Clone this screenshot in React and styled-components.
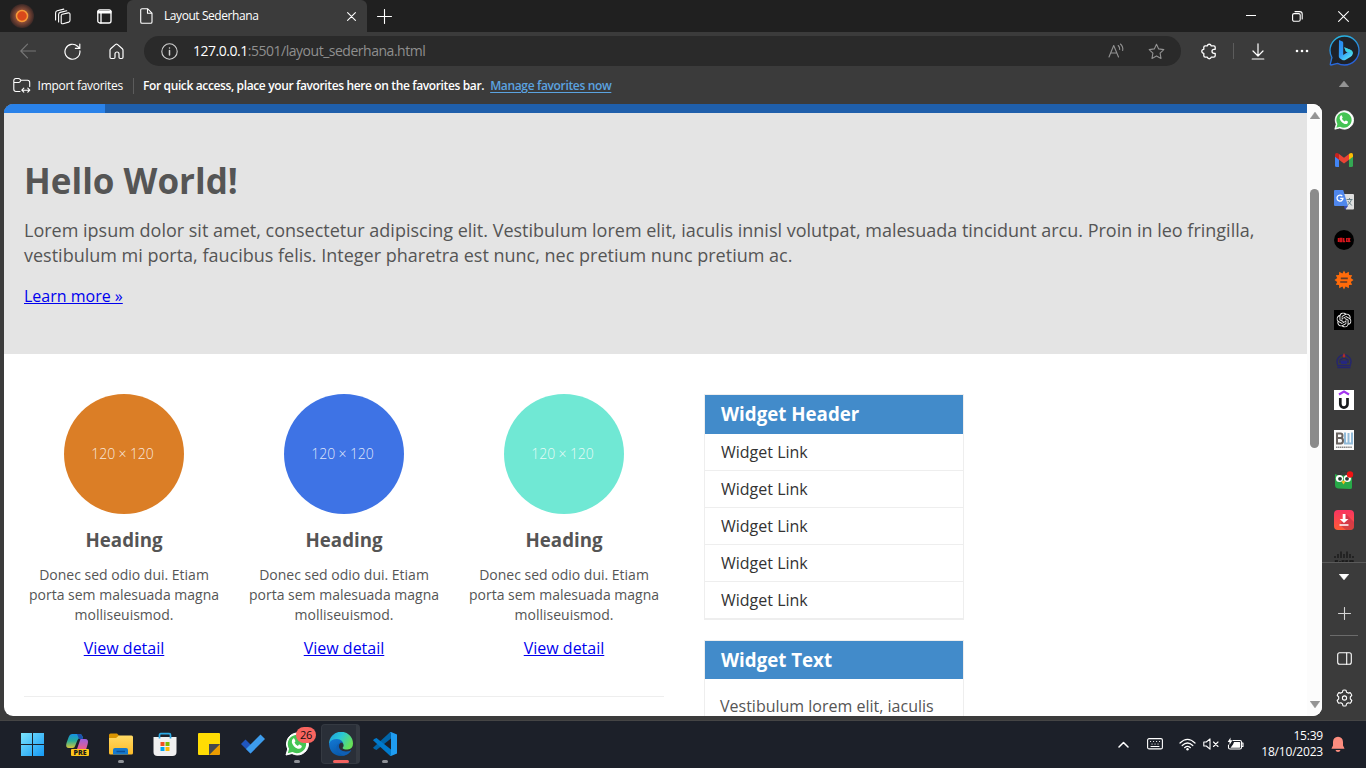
import React from "react";
import styled, { createGlobalStyle } from "styled-components";

const GlobalStyle = createGlobalStyle`
  * { box-sizing: border-box; }
  body { margin: 0; background: #1d212b; overflow: hidden; font-family: "Open Sans", "Noto Sans", sans-serif; }
  h1, h2, h3, p, ul { margin: 0; padding: 0; }
  svg { display: block; flex: none; }
`;

/* ---------- desktop and browser frame ---------- */

const Desktop = styled.div`
  width: 1366px;
  height: 768px;
  display: flex;
  flex-direction: column;
  overflow: hidden;
`;

const TitleBar = styled.header`
  height: 32px;
  flex: none;
  display: flex;
  background: #202020;
  color: #fff;
`;

const TitleTools = styled.div`
  width: 127px;
  display: flex;
  align-items: center;
  padding-left: 10px;
`;

const ToolSlot = styled.span`
  width: ${(p) => p.$w}px;
  flex: none;
  display: flex;
  justify-content: ${(p) => p.$align || "center"};
`;

const Tab = styled.div`
  width: 240px;
  display: flex;
  align-items: center;
  padding: 0 11px 0 13px;
  background: #3b3b3b;
  border-radius: 6px 6px 0 0;
`;

const UiText = styled.span`
  font-size: 12px;
  line-height: 16px;
  white-space: nowrap;
  color: ${(p) => p.$color || "#fff"};
  font-weight: ${(p) => (p.$bold ? 600 : 400)};
  letter-spacing: ${(p) => p.$track || 0}px;
`;

const TabTitle = styled(UiText)`
  flex: 1;
  margin-left: 11px;
`;

const NewTab = styled.div`
  display: flex;
  align-items: center;
  padding-left: 10px;
  flex: 1;
`;

const WindowButtons = styled.div`
  display: flex;
  align-items: center;
`;

const WindowButton = styled.span`
  width: 46px;
  display: flex;
  justify-content: center;
`;

const BrowserBody = styled.div`
  height: 689px;
  flex: none;
  display: flex;
  background: #3b3b3b;
  border-bottom: 1px solid #454545;
`;

const MainColumn = styled.div`
  width: 1322px;
  display: flex;
  flex-direction: column;
`;

const Toolbar = styled.div`
  height: 38px;
  display: flex;
  align-items: center;
  padding-left: 6px;
`;

const ToolButton = styled.span`
  width: 44px;
  flex: none;
  display: flex;
  justify-content: center;
`;

const Omnibox = styled.div`
  width: 1037px;
  height: 30px;
  flex: none;
  margin-left: 6px;
  padding: 0 16px 0 17px;
  border-radius: 15px;
  background: #2a2a2a;
  display: flex;
  align-items: center;
`;

const Url = styled.span`
  flex: 1;
  margin-left: 15px;
  font-size: 14px;
  line-height: 20px;
  letter-spacing: -0.48px;
  color: #8f8f8f;
  b { font-weight: 400; color: #fff; }
`;

const OmniIcons = styled.span`
  display: flex;
  gap: 23px;
`;

const ActionRow = styled.div`
  flex: 1;
  display: flex;
  align-items: center;
  padding-left: 20px;
`;

const Separator = styled.i`
  width: 1px;
  height: 16px;
  flex: none;
  background: #5c5c5c;
  margin: ${(p) => p.$m};
`;

const FavoritesBar = styled.div`
  height: 34px;
  display: flex;
  align-items: center;
  padding: 0 0 3px 13px;
`;

const ManageLink = styled(UiText)`
  color: #5ba3e0;
  text-decoration: underline;
  text-underline-offset: 2px;
  margin-left: 6px;
`;

/* ---------- web page ---------- */

const Viewport = styled.main`
  width: 1318px;
  height: 612px;
  margin-left: 4px;
  border-radius: 9px;
  overflow: hidden;
  display: flex;
  background: #fff;
`;

const Page = styled.div`
  width: 1303px;
  height: 612px;
  overflow: hidden;
  color: #555;
`;

const NavStrip = styled.div`
  height: 9px;
  background: #1f5fab;
`;

const NavActive = styled.div`
  width: 101px;
  height: 9px;
  background: #2a82e9;
`;

const Hero = styled.section`
  height: 241px;
  padding: 44px 20px 0;
  background: #e4e4e4;
`;

const HeroTitle = styled.h1`
  font-size: 35px;
  line-height: 48px;
  margin-bottom: 13px;
`;

const HeroText = styled.p`
  font-size: 18px;
  line-height: 25px;
  margin-bottom: 17px;
  white-space: pre-line;
`;

const PageLink = styled.span`
  display: block;
  font-size: 16px;
  line-height: 22px;
  color: #0000ee;
  text-decoration: underline;
`;

const Content = styled.div`
  display: flex;
  align-items: flex-start;
  gap: 40px;
  padding: 40px 20px 0;
`;

const Features = styled.section`
  width: 640px;
  height: 303px;
  display: flex;
  gap: 20px;
  border-bottom: 1px solid #eee;
`;

const Feature = styled.article`
  width: 200px;
  text-align: center;
`;

const Circle = styled.div`
  width: 120px;
  height: 120px;
  margin: 0 auto;
  padding: 0 3px 1px 0;
  border-radius: 50%;
  display: flex;
  align-items: center;
  justify-content: center;
  background: ${(p) => p.$color};
  color: rgba(255, 255, 255, 0.85);
  font-size: 14px;
  font-weight: 300;
  letter-spacing: -0.1px;
`;

const FeatureTitle = styled.h3`
  font-size: 18.72px;
  line-height: 25px;
  margin: 13px 0;
`;

const FeatureText = styled.p`
  font-size: 14px;
  line-height: 20px;
  margin-bottom: 12px;
`;

const Aside = styled.aside`
  width: 260px;
  display: flex;
  flex-direction: column;
  gap: 20px;
`;

const Widget = styled.section`
  border: 1px solid #eee;
`;

const WidgetTitle = styled.h3`
  height: ${(p) => p.$h}px;
  padding: 6px 16px;
  font-size: 18.72px;
  line-height: 26px;
  color: #fff;
  background: #428bca;
`;

const WidgetLink = styled.div`
  height: 37px;
  padding: 7px 16px;
  font-size: 16px;
  line-height: 22px;
  color: #333;
  border-bottom: 1px solid #eee;
`;

const WidgetText = styled.p`
  padding: 16px 15px;
  font-size: 16px;
  line-height: 22px;
`;

const ScrollTrack = styled.div`
  width: 15px;
  display: flex;
  flex-direction: column;
  align-items: center;
  padding: 8px 0 8px;
  background: #fcfcfc;
`;

const ScrollThumb = styled.div`
  width: 9px;
  height: 259px;
  margin: 70px 0 auto;
  border-radius: 5px;
  background: #8b8b8b;
`;

/* ---------- side bar ---------- */

const Sidebar = styled.nav`
  width: 44px;
  display: flex;
  flex-direction: column;
  align-items: center;
  padding-top: 3px;
`;

const SideArrow = styled.span`
  height: 34px;
  padding-top: 2px;
  display: flex;
  align-items: center;
`;

const SideList = styled.div`
  width: 44px;
  height: 463px;
  flex: none;
  overflow: hidden;
  border-bottom: 1px solid #5a5a5a;
`;

const SideItem = styled.div`
  height: 40px;
  display: flex;
  align-items: center;
  justify-content: center;
`;

const SideTools = styled.div`
  flex: 1;
  display: flex;
  flex-direction: column;
  align-items: center;
`;

const SideTool = styled.span`
  height: ${(p) => p.$h}px;
  display: flex;
  align-items: center;
`;

const SideRule = styled.i`
  width: 28px;
  height: 1px;
  background: #6b6b6b;
`;

/* ---------- task bar ---------- */

const TaskBar = styled.footer`
  height: 47px;
  flex: none;
  display: flex;
  justify-content: space-between;
  background: #1c2029;
`;

const TaskApps = styled.div`
  display: flex;
  padding-left: 11px;
`;

const TaskApp = styled.div`
  width: 44px;
  height: 47px;
  position: relative;
  display: flex;
  flex-direction: column;
  align-items: center;
  padding-top: 11px;
`;

const ActiveTile = styled.span`
  position: absolute;
  left: 2px;
  top: 3px;
  width: 39px;
  height: 40px;
  border-radius: 4px;
  background: #2a2f38;
  border: 1px solid #353a42;
  border-right-width: 4px;
  z-index: 0;
`;

const AppArt = styled.span`
  position: relative;
`;

const RunMark = styled.i`
  position: relative;
  width: ${(p) => (p.$active ? 16 : 6)}px;
  height: 3px;
  margin-top: 4px;
  border-radius: 2px;
  background: ${(p) => (p.$active ? "#f2625f" : "#8f9297")};
`;

const Badge = styled.span`
  position: absolute;
  left: 21px;
  top: 6px;
  width: 20px;
  height: 16px;
  border-radius: 8px;
  background: #f8645f;
  color: #111;
  font-size: 11px;
  line-height: 16px;
  text-align: center;
  letter-spacing: -0.3px;
`;

const Tray = styled.div`
  display: flex;
  align-items: center;
  padding: 0 21px 1px 0;
`;

const TraySlot = styled.span`
  width: ${(p) => p.$w}px;
  display: flex;
  justify-content: center;
`;

const Clock = styled.div`
  width: 72px;
  display: flex;
  flex-direction: column;
  align-items: flex-end;
  margin-right: 8px;
`;

/* ---------- icons ---------- */

const Line = ({ w = 16, h = w, c = "#fff", s = 1.1, children }) => (
  <svg width={w} height={h} viewBox={`0 0 ${w} ${h}`} fill="none" stroke={c} strokeWidth={s} strokeLinecap="round" strokeLinejoin="round">
    {children}
  </svg>
);

const Art = ({ w = 20, h = w, children }) => (
  <svg width={w} height={h} viewBox={`0 0 ${w} ${h}`}>{children}</svg>
);

const ProfileIcon = () => (
  <Art w={24}>
    <defs>
      <radialGradient id="glow">
        <stop offset="45%" stopColor="#98533b" />
        <stop offset="100%" stopColor="#3b2826" />
      </radialGradient>
    </defs>
    <circle cx="12" cy="12" r="12" fill="url(#glow)" />
    <circle cx="12" cy="12" r="5.5" fill="#d9481b" stroke="#f49a38" strokeWidth="1.5" />
  </Art>
);

const WorkspacesIcon = () => (
  <Line w={17}>
    <path d="M8.300 6.300 14.200 4.900Q16 4.600 16 6.300V12.300Q16 13.700 14.700 14.100L9 15.700Q7.200 16.100 7.200 14.400V7.900Q7.200 6.600 8.300 6.300Z" />
    <path d="M4.600 14V6.500Q4.600 4.800 6.200 4.400L12.800 2.800M1.600 12V4.900Q1.600 3.200 3.200 2.800L9.800 1.100" />
  </Line>
);

const TabActionsIcon = () => (
  <Line w={15} s={1.3}>
    <rect x=".8" y=".8" width="13.2" height="13.2" rx="2" />
    <path d="M1 2.5h13M1 3.8h13M4 4v10" />
  </Line>
);

const FileIcon = () => (
  <Line w={13} h={16}>
    <path d="M2 .7h5.5L12 5.2V14a1.3 1.3 0 0 1-1.3 1.3H2A1.3 1.3 0 0 1 .7 14V2A1.3 1.3 0 0 1 2 .7ZM7.5.9v4.3H12" />
  </Line>
);

const CloseIcon = ({ s = 9 }) => (
  <Line w={s}>
    <path d={`M.6.6 ${s - 0.6} ${s - 0.6}M${s - 0.6}.6.6 ${s - 0.6}`} />
  </Line>
);

const PlusIcon = ({ s = 15, c }) => (
  <Line w={s} c={c}>
    <path d={`M${s / 2} .5v${s - 1}M.5 ${s / 2}h${s - 1}`} />
  </Line>
);

const BackIcon = () => (
  <Line c="#777"><path d="M15.5 8H.8M7.5 1.2.8 8l6.7 6.8" /></Line>
);

const RefreshIcon = () => (
  <Line w={17} s={1.2}><path d="M15.9 7.8a7.5 7.5 0 1 1-2.4-4.6l2 2M15.8 1v4.4h-4.4" /></Line>
);

const HomeIcon = () => (
  <Line w={15} h={17} s={1.2}>
    <path d="M1 7.2Q1 6.3 1.7 5.7L6.6 1.4q.9-.7 1.8 0l4.9 4.3q.7.6.7 1.5v7.1q0 1.2-1.2 1.2h-1.600q-1.200 0-1.200-1.200v-3.300a2 2 0 0 0-4 0v3.300q0 1.200-1.200 1.200H2.200Q1 15.500 1 14.300Z" />
  </Line>
);

const InfoIcon = () => (
  <Line w={17} c="#d0d0d0" s={1.1}>
    <circle cx="8.5" cy="8.5" r="7.7" />
    <path d="M8.500 7.500v4.500M8.500 4.900v.2" strokeWidth="1.500" />
  </Line>
);

const ImportIcon = () => (
  <Line w={18} h={17}>
    <path d="M7 14.500H3A2.200 2.200 0 0 1 .8 12.300V3.500A2 2 0 0 1 2.800 1.500H5.500q.8 0 1.400.7L8 3.300h6.500a2.200 2.200 0 0 1 2.200 2.200V9.500M1 5.500h4.700q.7 0 1.200-.6L8 3.500M9 13.200h7.500M10.800 11.200l-2 2 2 2M14.800 11.200l2 2-2 2" />
  </Line>
);

const ReadAloudIcon = () => (
  <Line w={17} c="#929292">
    <path d="M1 14 5.700 2.500 10.500 14M2.600 10h6.300M10.200 2.500q1.800 1.700 1.500 4M12.400 1q3 2.600 2.300 6.500" />
  </Line>
);

const StarIcon = () => (
  <Line w={17} c="#929292">
    <path d="m8.500 1.200 2.200 4.700 5.100.7-3.700 3.600.9 5.200-4.500-2.500-4.500 2.500.9-5.200L1.200 6.600l5.100-.7Z" />
  </Line>
);

const PuzzleIcon = () => (
  <Line w={17} s={1.3}>
    <path d="M4.200 2.800H6.300a2 2 0 0 1 3.900 0H12.800Q14.200 2.800 14.200 4.200V6.300H13a2 2 0 0 0 0 4h1.200V12.800Q14.200 14.200 12.800 14.200H10.200a2 2 0 0 1-3.900 0H4.200Q2.800 14.200 2.800 12.800V10.300a2 2 0 0 1 0-4V4.200Q2.800 2.800 4.200 2.800Z" />
  </Line>
);

const DownloadIcon = () => (
  <Line w={14} h={17} s={1.2}><path d="M7 .8v12M2 8l5 5 5-5M1.200 16h11.600" /></Line>
);

const DotsIcon = () => (
  <Art w={14} h={4}>
    {[2, 7, 12].map((x) => <circle key={x} cx={x} cy="2" r="1.300" fill="#fff" />)}
  </Art>
);

const Triangle = ({ up, c = "#949494", w = 10, h = 6 }) => (
  <Art w={w} h={h}>
    <path d={up ? `M${w / 2} 0 ${w} ${h}H0Z` : `M0 0H${w}L${w / 2} ${h}Z`} fill={c} stroke={c} strokeWidth=".4" strokeLinejoin="round" />
  </Art>
);

const BingIcon = () => (
  <Art w={31}>
    <defs>
      <linearGradient id="bingRing" x1="0" y1="0" x2=".3" y2="1">
        <stop offset="0" stopColor="#28bde2" /><stop offset="1" stopColor="#2863dc" />
      </linearGradient>
      <linearGradient id="bingB" x1="0" y1="0" x2=".6" y2="1">
        <stop offset="0" stopColor="#2389ef" /><stop offset=".6" stopColor="#329bf5" /><stop offset="1" stopColor="#54ddf7" />
      </linearGradient>
    </defs>
    <path d="M1 15.500a14.500 14.500 0 1 1 14.500 14.500Q11.500 30 8.500 28.400L2 30q-1 0-.7-1L2.900 22.500Q1 19 1 15.500Z" fill="#1e2229" stroke="url(#bingRing)" strokeWidth="1.300" />
    <path d="m10 5 3 1.200q1.200.4 1.200 1.600V20l4.300-2.700-1.600-.8-1.700-4.300 6.100 2.500q2.900 1.300 2.400 4.400-.3 1.600-2 2.600l-5 3q-2 1.100-3.800 0L11 23.500Q9.800 22.700 9.800 21.300Z" fill="url(#bingB)" />
    <path d="m15.200 12.200 6.100 2.500q2.900 1.300 2.400 4.400-2.700-2.500-6.800-2.600Z" fill="#3ed2dd" />
  </Art>
);

const WhatsAppIcon = ({ s = 20 }) => (
  <svg width={s} height={s} viewBox="0 0 24 24">
    <path d="M1 23 2.700 17A11 11 0 1 1 7 21.500Z" fill="#fff" stroke="#fff" strokeLinejoin="round" />
    <path d="m2.800 21.200 1.300-4.400a9.200 9.200 0 1 1 3.300 3.200Z" fill="#45c454" />
    <path d="M8.200 6.500q.7-.4 1.200.2l1 2.200q.1.500-.9 1.600.9 2.200 3.400 3.400 1-1.400 1.500-1.300l2.300 1.200q.4.500-.4 2-1.200 1.500-3.500.9Q8 15 6.800 10.200q-.2-2.600 1.400-3.700Z" fill="#fff" />
  </svg>
);

const GmailIcon = () => (
  <Art>
    <path d="M1 5v10.500Q1 17 2.500 17H5V8Z" fill="#4285f4" />
    <path d="M15 8v9h2.500q1.500 0 1.500-1.500V5Z" fill="#34a853" />
    <path d="m5 4 5 3.800L15 4v5.800l-5 3.800-5-3.800Z" fill="#ea4335" />
    <path d="M1 5q0-3 3-1.700L5 4v5.800L1 6.800Z" fill="#c5221f" />
    <path d="M19 5q0-3-3-1.700L15 4v5.800l4-3Z" fill="#fbbc04" />
  </Art>
);

const TranslateIcon = () => (
  <Art>
    <path d="M8 4h11q1 0 1 1v13.500q0 1-1 1h-7Z" fill="#dedede" />
    <path d="m10 16 4 0-3 4Z" fill="#3a49b0" />
    <path d="M1 0h8.200L14 16H1q-1 0-1-1V1q0-1 1-1Z" fill="#4f87ed" />
    <path d="M8.300 6.200A3 3 0 1 0 9 8.300H6.200" fill="none" stroke="#fff" strokeWidth="1.300" />
    <path d="M12.500 9.500h6M15.500 8v1.500M17.500 9.500q-.8 3.500-4 5.500M13.800 11l4 4.500" fill="none" stroke="#678087" />
  </Art>
);

const IdlixIcon = () => (
  <Art>
    <circle cx="10" cy="10" r="10" fill="#000" />
    <path d="M4.500 8v4M6.200 8.500h1.600v3H6.200ZM9.700 8v3.500h1.500M12.700 8v4M14 8l2 4M16 8l-2 4" fill="none" stroke="#d5151c" strokeWidth="1.500" />
  </Art>
);

const GearBadgeIcon = () => (
  <Art>
    <path d="M10 .5 11.600 3.400 14.800 1.800 15 5 18.200 5.200 16.800 8 19.500 10 16.800 12 18.200 14.800 15 15 14.800 18.200 11.600 16.600 10 19.500 8.400 16.600 5.200 18.200 5 15 1.800 14.800 3.200 12 .5 10 3.200 8 1.800 5.200 5 5 5.200 1.800 8.400 3.400Z" fill="#ff6b0a" />
    <path d="M6.800 8.300h7M6.200 12h7" stroke="#603b28" strokeWidth="1.700" />
  </Art>
);

const ChatGptIcon = () => (
  <Art>
    <rect width="20" height="20" fill="#000" />
    <svg x="2.500" y="2.500" width="15" height="15" viewBox="0 0 24 24">
      <path
        fill="#f2f2f2"
        d="M22.2819 9.8211a5.9847 5.9847 0 0 0-.5157-4.9108 6.0462 6.0462 0 0 0-6.5098-2.9A6.0651 6.0651 0 0 0 4.9807 4.1818a5.9847 5.9847 0 0 0-3.9977 2.9 6.0462 6.0462 0 0 0 .7427 7.0966 5.98 5.98 0 0 0 .511 4.9107 6.051 6.051 0 0 0 6.5146 2.9001A5.9847 5.9847 0 0 0 13.2599 24a6.0557 6.0557 0 0 0 5.7718-4.2058 5.9894 5.9894 0 0 0 3.9977-2.9001 6.0557 6.0557 0 0 0-.7475-7.0729zm-9.022 12.6081a4.4755 4.4755 0 0 1-2.8764-1.0408l.1419-.0804 4.7783-2.7582a.7948.7948 0 0 0 .3927-.6813v-6.7369l2.02 1.1686a.071.071 0 0 1 .038.052v5.5826a4.504 4.504 0 0 1-4.4945 4.4944zm-9.6607-4.1254a4.4708 4.4708 0 0 1-.5346-3.0137l.142.0852 4.783 2.7582a.7712.7712 0 0 0 .7806 0l5.8428-3.3685v2.3324a.0804.0804 0 0 1-.0332.0615L9.74 19.9502a4.4992 4.4992 0 0 1-6.1408-1.6464zM2.3408 7.8956a4.485 4.485 0 0 1 2.3655-1.9728V11.6a.7664.7664 0 0 0 .3879.6765l5.8144 3.3543-2.0201 1.1685a.0757.0757 0 0 1-.071 0l-4.8303-2.7865A4.504 4.504 0 0 1 2.3408 7.872zm16.5963 3.8558L13.1038 8.364 15.1192 7.2a.0757.0757 0 0 1 .071 0l4.8303 2.7913a4.4944 4.4944 0 0 1-.6765 8.1042v-5.6772a.79.79 0 0 0-.407-.667zm2.0107-3.0231l-.142-.0852-4.7735-2.7818a.7759.7759 0 0 0-.7854 0L9.409 9.2297V6.8974a.0662.0662 0 0 1 .0284-.0615l4.8303-2.7866a4.4992 4.4992 0 0 1 6.6802 4.66zM8.3065 12.863l-2.02-1.1638a.0804.0804 0 0 1-.038-.0567V6.0742a4.4992 4.4992 0 0 1 7.3757-3.4537l-.142.0805L8.704 5.459a.7948.7948 0 0 0-.3927.6813zm1.0976-2.3654l2.602-1.4998 2.6069 1.4998v2.9994l-2.5974 1.4997-2.6067-1.4997Z"
      />
    </svg>
  </Art>
);

const CampusIcon = () => (
  <Art>
    <g fill="none" stroke="#24256f" strokeWidth="1.300">
      <path d="M3.500 14.500a7 7 0 1 1 13 0M6 13V10l4-2 4 2v3M3 15.500h14M3.500 17.500h13" />
    </g>
    <path d="M10 3 11.500 6 10 8 8.500 6Z" fill="#b12c2c" />
    <path d="M7 10.500h6V14H7Z" fill="#252780" />
  </Art>
);

const UdemyIcon = () => (
  <Art>
    <rect width="20" height="20" fill="#fff" />
    <path d="M5 4.500 10 1.500l5 3" fill="none" stroke="#a435f0" strokeWidth="2.200" />
    <path d="M6.300 8v6a3.600 3.600 0 0 0 7.200 0V8" fill="none" stroke="#17191c" strokeWidth="2.700" />
  </Art>
);

const BwIcon = () => (
  <Art>
    <rect width="20" height="20" fill="#fafafa" />
    <path d="M3 3.500h3.500q2 0 2 2.200T6.500 8H3ZM3 8h3.800q2.200 0 2.200 2.700t-2.200 2.800H3Z" fill="none" stroke="#68625f" strokeWidth="2" />
    <path d="M11 2.500v11h7v-11M14.500 3v10" fill="none" stroke="#91bad8" strokeWidth="2" />
    <path d="M2 17.300h16" stroke="#858585" strokeWidth="1.500" strokeDasharray="1.400 .5" />
  </Art>
);

const OwlIcon = () => (
  <Art>
    <path d="M6 5q0-4 4-4t4 4" fill="none" stroke="#303833" />
    <path d="m1 4 4 1.500h10l3-.5v12.500q0 1.500-2 1.500l-12-.5q-3-.5-3-3.500Z" fill="#27a948" />
    <circle cx="5.500" cy="8.500" r="3.600" fill="#fff" /><circle cx="13.300" cy="8.500" r="3.600" fill="#fff" />
    <circle cx="6" cy="8.800" r="1.900" fill="#273b31" /><circle cx="13" cy="8.800" r="1.900" fill="#273b31" />
    <path d="m7.500 11.500 2-1 2 1-2 3Z" fill="#f6bd22" />
    <circle cx="16" cy="4.500" r="3.200" fill="#f11313" />
  </Art>
);

const SaverIcon = () => (
  <Art>
    <defs>
      <linearGradient id="saver" x2="0" y2="1"><stop stopColor="#f83461" /><stop offset="1" stopColor="#ff5b36" /></linearGradient>
    </defs>
    <rect width="20" height="20" rx="4" fill="url(#saver)" />
    <path d="m12 4 8 8v4q0 4-4 4h-4l-6-5Z" fill="#a92648" opacity=".45" />
    <path d="M8.700 4h2.800v5h3L10 13 5.700 9h3ZM5.500 14.200h9v1.600h-9Z" fill="#fff" />
  </Art>
);

const CiscoIcon = () => (
  <Art>
    <path d="M1 6v2M4 4v4M7 1.500V8M10 4v4M13 1.500V8M16 4v4M19 6v2" stroke="#171717" strokeWidth="1.300" />
    <path d="M4 11H1.500v4H4M6 11v4M10.500 11H8.300v2h2v2H8M14 11h-2v4h2M16 11h3v4h-3Z" fill="none" stroke="#171717" strokeWidth="1.400" />
  </Art>
);

const PanelIcon = () => (
  <Line w={15} h={13}><rect x=".7" y=".7" width="13.600" height="11.600" rx="2" /><path d="M9.700 1v11.300" /></Line>
);

const SettingsIcon = () => (
  <Line w={17} h={18}>
    <path d="M7 1.200q1.500-.5 3 0l.6 2.100 1.500.8 2.100-.5q1.200 1.200 1.600 2.800L14.300 8v1.900l1.500 1.600q-.5 1.700-1.600 2.800l-2.100-.5-1.500.9-.6 2.100q-1.500.4-3 0l-.6-2.100-1.500-.9-2.100.5Q1.700 13.200 1.200 11.500L2.700 9.900V8L1.200 6.400Q1.700 4.800 2.800 3.600l2.100.5 1.500-.8Z" />
    <circle cx="8.500" cy="9" r="2.100" />
  </Line>
);

const WindowsIcon = () => (
  <Art w={24}>
    <defs><linearGradient id="win" gradientUnits="userSpaceOnUse" x1="0" y1="0" x2="24" y2="24"><stop stopColor="#7de5fc" /><stop offset="1" stopColor="#1297f4" /></linearGradient></defs>
    <path d="M0 1h11v11H0ZM12 1h11v11H12ZM0 13h11v11H0ZM12 13h11v11H12Z" fill="url(#win)" />
  </Art>
);

const PreLabel = styled.span`
  position: absolute;
  left: 6px;
  top: 17px;
  width: 18px;
  height: 7px;
  border-radius: 1px;
  background: #ffc61a;
  color: #17191c;
  font-size: 7px;
  font-weight: 800;
  line-height: 7px;
  text-align: center;
`;

const CopilotIcon = () => (
  <>
    <Art w={24}>
      <defs>
        <linearGradient id="cpA" x2="0" y2="1"><stop stopColor="#1592e5" /><stop offset=".5" stopColor="#2aad96" /><stop offset="1" stopColor="#d7c63a" /></linearGradient>
        <linearGradient id="cpB" x2="0" y2="1"><stop stopColor="#9b61dd" /><stop offset="1" stopColor="#ed5c89" /></linearGradient>
      </defs>
      <path d="M7 2h8q2 0 3 4h-3q-2 0-2.700 2.500l-2 5Q9.700 16 7.500 16H4Q0 16 1.500 11L3.700 5Q4.700 2 7 2Z" fill="url(#cpA)" />
      <path d="M12 2h3q2 0 3 5h-4Z" fill="#1c4fae" />
      <path d="M15.500 7H20q4 0 2.700 5l-1.500 5H12Z" fill="url(#cpB)" />
    </Art>
    <PreLabel>PRE</PreLabel>
  </>
);

const ExplorerIcon = () => (
  <Art w={24}>
    <defs><linearGradient id="fold" x2="0" y2="1"><stop stopColor="#ffda65" /><stop offset="1" stopColor="#fdbb28" /></linearGradient></defs>
    <path d="M0 3q0-1.500 1.500-1.500H8L10.500 4H22v6H0Z" fill="#d99400" />
    <path d="M0 6h7l3-2.500h12.500Q24 3.500 24 5v16q0 1.500-1.500 1.500h-21Q0 22.500 0 21Z" fill="url(#fold)" />
    <path d="M4 22.500v-4.500q0-2 2-2h11q2 0 2 2v4.500Z" fill="#1679cc" />
    <path d="M7.500 19.500H16" stroke="#0a4f98" strokeWidth="1.500" />
  </Art>
);

const StoreIcon = () => (
  <Art w={24}>
    <path d="M6.500 6V3q0-1.300 1.300-1.300h8.400Q17.500 1.700 17.500 3v3" fill="none" stroke="#2ba9e5" strokeWidth="1.700" />
    <path d="M.5 5h23v15q0 4-4 4h-15q-4 0-4-4Z" fill="#f0f0f0" />
    <path d="M6.500 5v1.500M17.500 5v1.500" stroke="#2ba9e5" strokeWidth="1.700" />
    <path d="M7.500 10h4v4h-4Z" fill="#f25022" /><path d="M12.500 10h4v4h-4Z" fill="#7fba00" />
    <path d="M7.500 15h4v4h-4Z" fill="#00a4ef" /><path d="M12.500 15h4v4h-4Z" fill="#ffb900" />
  </Art>
);

const NotesIcon = () => (
  <Art w={24}>
    <path d="M2 1h20q1 0 1 1v10L12 23H2q-1 0-1-1V2q0-1 1-1Z" fill="#ffdc04" />
    <path d="M23 12v10q0 1-1 1H12Z" fill="#ec9d00" /><path d="M12 12h11L12 23Z" fill="#46494e" />
  </Art>
);

const TodoIcon = () => (
  <Art w={24}>
    <path d="m0 12 4.500-4.500L14 17l-4.500 4.500Z" fill="#2056be" />
    <path d="m5 17 4.500 4.500L24 7l-4.500-4.500Z" fill="#3d9cec" />
  </Art>
);

const EdgeIcon = () => (
  <Art w={24}>
    <defs>
      <linearGradient id="edgeTop" x2="1" y2=".5"><stop stopColor="#1b9be0" /><stop offset=".5" stopColor="#2ac7d5" /><stop offset="1" stopColor="#66df59" /></linearGradient>
      <linearGradient id="edgeLow" x2=".6" y2="1"><stop stopColor="#1479d5" /><stop offset="1" stopColor="#0756a5" /></linearGradient>
    </defs>
    <path d="M0 12A12 12 0 0 1 24 11.500Q24 17 18.500 17.500 14.500 17.500 13.500 16 15 14.500 14.500 12.500 13 8 7.500 8.500 2.500 9 0 12Z" fill="url(#edgeTop)" />
    <path d="M0 12Q1.500 7 8 7 14 7.500 14.600 12.800 14.500 10.500 12 10.500 9 11.500 9.500 15 11 20 17 20 20 20 22.400 18 19 24 12 24 1 23.500 0 12Z" fill="url(#edgeLow)" />
    <path d="M12 10.500Q8.500 11 7.500 15 7.500 21 14 23.600 19.500 23 22.400 18 19.500 20 16.500 19.500 10.500 19 9.800 14.500 9.800 12 12 10.500Z" fill="#0f5fb5" />
  </Art>
);

const VsCodeIcon = () => (
  <Art w={24}>
    <path d="M18 0v6.500L3.500 18 1.200 17 0 15.800 17 .2Z" fill="#0065a9" />
    <path d="M18 24v-6.500L3.500 6 1.200 7 0 8.200 17 23.800Z" fill="#007acc" />
    <path d="m18 0 6 2.500v19L18 24l-1.500-.5q1.500.5 1.500-1v-21q0-1.500-1.500-1Z" fill="#1f9cf0" />
  </Art>
);

const sideApps = [WhatsAppIcon, GmailIcon, TranslateIcon, IdlixIcon, GearBadgeIcon, ChatGptIcon, CampusIcon, UdemyIcon, BwIcon, OwlIcon, SaverIcon, CiscoIcon];

const taskApps = [
  { icon: WindowsIcon },
  { icon: CopilotIcon },
  { icon: ExplorerIcon, running: true },
  { icon: StoreIcon },
  { icon: NotesIcon },
  { icon: TodoIcon },
  { icon: WhatsAppIcon, size: 24, running: true, badge: "26" },
  { icon: EdgeIcon, running: true, active: true },
  { icon: VsCodeIcon, running: true },
];

const circles = ["#db7e26", "#3e73e5", "#70e8d4"];
const links = [1, 2, 3, 4, 5];

export default function App() {
  return (
    <Desktop>
      <GlobalStyle />
      <TitleBar>
        <TitleTools>
          <ToolSlot $w={24}><ProfileIcon /></ToolSlot>
          <ToolSlot $w={56}><WorkspacesIcon /></ToolSlot>
          <ToolSlot $w={28}><TabActionsIcon /></ToolSlot>
        </TitleTools>
        <Tab>
          <FileIcon />
          <TabTitle $track={-0.43}>Layout Sederhana</TabTitle>
          <CloseIcon />
        </Tab>
        <NewTab><PlusIcon /></NewTab>
        <WindowButtons>
          <WindowButton><Line w={10} h={2}><path d="M0 .5h10" /></Line></WindowButton>
          <WindowButton>
            <Line w={11}><rect x=".6" y="2.600" width="7.600" height="7.600" rx="1.500" /><path d="M3 .6h4.700a2.500 2.500 0 0 1 2.500 2.500V8" /></Line>
          </WindowButton>
          <WindowButton><CloseIcon s={11} /></WindowButton>
        </WindowButtons>
      </TitleBar>

      <BrowserBody>
        <MainColumn>
          <Toolbar>
            <ToolButton><BackIcon /></ToolButton>
            <ToolButton><RefreshIcon /></ToolButton>
            <ToolButton><HomeIcon /></ToolButton>
            <Omnibox>
              <InfoIcon />
              <Url><b>127.0.0.1</b>:5501/layout_sederhana.html</Url>
              <OmniIcons><ReadAloudIcon /><StarIcon /></OmniIcons>
            </Omnibox>
            <ActionRow>
              <PuzzleIcon />
              <Separator $m="0 17px 0 15px" />
              <DownloadIcon />
              <ToolSlot $w={44} $align="flex-end"><DotsIcon /></ToolSlot>
            </ActionRow>
          </Toolbar>
          <FavoritesBar>
            <ImportIcon />
            <ToolSlot $w={92} $align="flex-end"><UiText $track={-0.28}>Import favorites</UiText></ToolSlot>
            <Separator $m="0 9px 0 10px" />
            <UiText $bold $track={-0.37}>For quick access, place your favorites here on the favorites bar.</UiText>
            <ManageLink $bold $color="#5ba3e0" $track={-0.35}>Manage favorites now</ManageLink>
          </FavoritesBar>
          <Viewport>
            <Page>
              <NavStrip><NavActive /></NavStrip>
              <Hero>
                <HeroTitle>Hello World!</HeroTitle>
                <HeroText>
                  {"Lorem ipsum dolor sit amet, consectetur adipiscing elit. Vestibulum lorem elit, iaculis innisl volutpat, malesuada tincidunt arcu. Proin in leo fringilla,\nvestibulum mi porta, faucibus felis. Integer pharetra est nunc, nec pretium nunc pretium ac."}
                </HeroText>
                <PageLink>Learn more »</PageLink>
              </Hero>
              <Content>
                <Features>
                  {circles.map((color) => (
                    <Feature key={color}>
                      <Circle $color={color}>120 × 120</Circle>
                      <FeatureTitle>Heading</FeatureTitle>
                      <FeatureText>Donec sed odio dui. Etiam porta sem malesuada magna molliseuismod.</FeatureText>
                      <PageLink>View detail</PageLink>
                    </Feature>
                  ))}
                </Features>
                <Aside>
                  <Widget>
                    <WidgetTitle $h={39}>Widget Header</WidgetTitle>
                    {links.map((n) => <WidgetLink key={n}>Widget Link</WidgetLink>)}
                  </Widget>
                  <Widget>
                    <WidgetTitle $h={38}>Widget Text</WidgetTitle>
                    <WidgetText>Vestibulum lorem elit, iaculis</WidgetText>
                  </Widget>
                </Aside>
              </Content>
            </Page>
            <ScrollTrack>
              <Triangle up h={7} />
              <ScrollThumb />
              <Triangle h={7} />
            </ScrollTrack>
          </Viewport>
        </MainColumn>

        <Sidebar>
          <BingIcon />
          <SideArrow><Triangle up /></SideArrow>
          <SideList>
            {sideApps.map((Icon, i) => <SideItem key={i}><Icon /></SideItem>)}
          </SideList>
          <SideTools>
            <SideTool $h={28}><Triangle c="#fff" /></SideTool>
            <SideTool $h={44}><PlusIcon s={13} c="#d5d5d5" /></SideTool>
            <SideRule />
            <SideTool $h={44}><PanelIcon /></SideTool>
            <SideTool $h={36}><SettingsIcon /></SideTool>
          </SideTools>
        </Sidebar>
      </BrowserBody>

      <TaskBar>
        <TaskApps>
          {taskApps.map(({ icon: Icon, size, running, active, badge }, i) => (
            <TaskApp key={i}>
              {active && <ActiveTile />}
              <AppArt><Icon s={size} /></AppArt>
              {running && <RunMark $active={active} />}
              {badge && <Badge>{badge}</Badge>}
            </TaskApp>
          ))}
        </TaskApps>
        <Tray>
          <TraySlot $w={32}><Line w={11} h={7} s={1.500}><path d="m1 6 4.500-4.500L10 6" /></Line></TraySlot>
          <TraySlot $w={32}>
            <Line w={16} h={12}><rect x=".6" y=".6" width="14.800" height="10.300" rx="1.500" /><path d="M3.500 3.500h.1M6.500 3.500h.1M9.500 3.500h.1M12.500 3.500h.1M5 6h.1M8 6h.1M11 6h.1M4 8.500h8" /></Line>
          </TraySlot>
          <TraySlot $w={32}>
            <Line w={17} h={13} s={1.200}>
              <path d="M1 5Q8.500-2.200 16 5M3.200 7.500q5.300-5 10.600 0M5.600 9.700q2.900-2.500 5.800 0" />
              <circle cx="8.500" cy="11.300" r="1.200" fill="#fff" stroke="none" />
            </Line>
          </TraySlot>
          <TraySlot $w={16}>
            <Line w={16} h={12}><path d="M.8 4h2.500L7 .8v10.400L3.300 8H.8ZM10.500 4l4.500 4.500M15 4l-4.500 4.500" /></Line>
          </TraySlot>
          <TraySlot $w={32}>
            <Line w={17} h={14}>
              <path d="M6 3.500h7q1.500 0 1.500 1.500v5.500q0 1.500-1.500 1.500H3q-1.500 0-1.500-1.500V8M15 6h1v3.500h-1" />
              <path d="M7 5h5.500q.7 0 .7.700V10q0 .7-.7.7H3.500L6 7.500Z" fill="#fff" stroke="none" />
              <path d="M3.500.5v2.800H5.500L2.500 8V5H.7Z" fill="#fff" stroke="none" />
            </Line>
          </TraySlot>
          <Clock>
            <UiText $track={-0.2}>15:39</UiText>
            <UiText $track={-0.2}>18/10/2023</UiText>
          </Clock>
          <Art w={14} h={17}>
            <path d="M7 .8q4.800.3 5 5.200v3.500l1.400 2.700q.1.500-.4.500H1q-.5 0-.4-.5L2 9.500V6Q2.200 1.100 7 .8ZM4.500 14h5Q9 16 7 16t-2.500-2Z" fill="#fc8d7f" />
          </Art>
        </Tray>
      </TaskBar>
    </Desktop>
  );
}
